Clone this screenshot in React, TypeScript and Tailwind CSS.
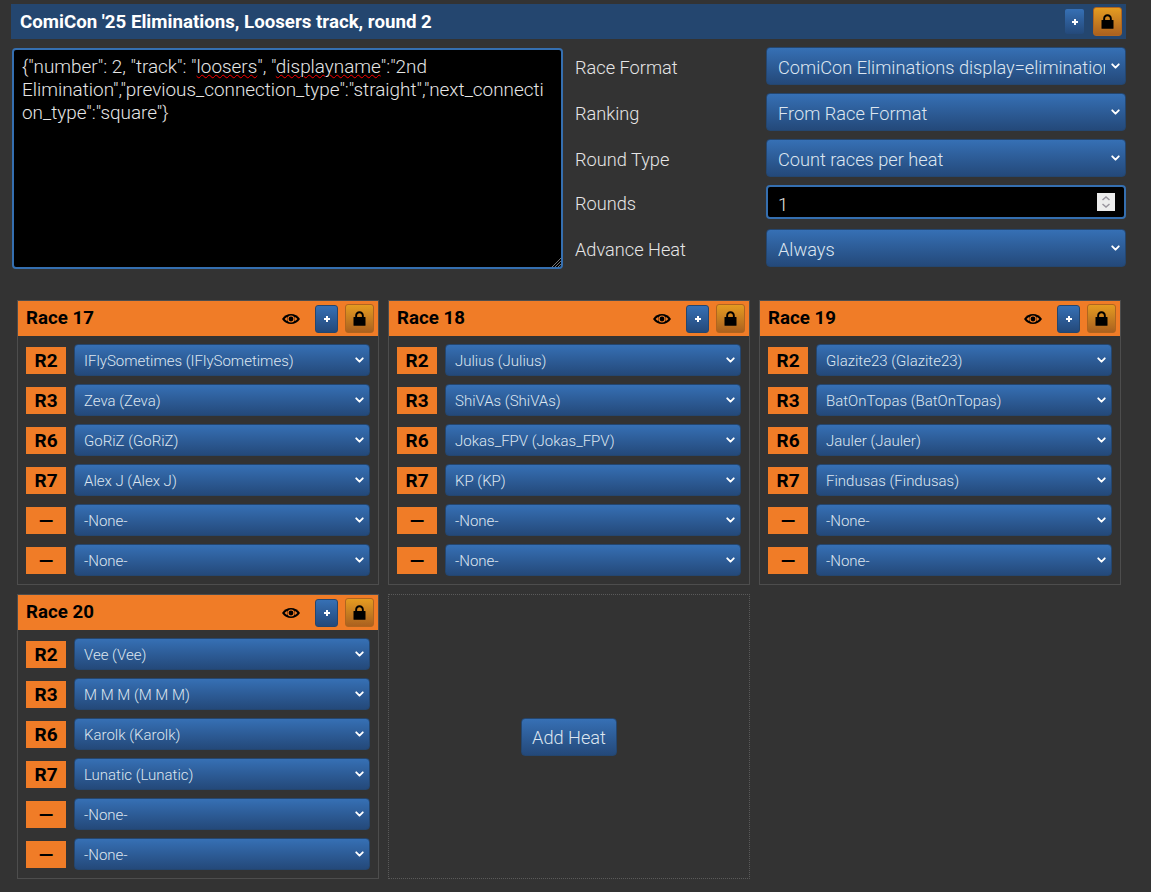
import { ChevronDown } from 'lucide-react';

type Race = { name: string; pilots: [string, string][] };

const races: Race[] = [
  {
    name: 'Race 17',
    pilots: [
      ['R2', 'IFlySometimes (IFlySometimes)'],
      ['R3', 'Zeva (Zeva)'],
      ['R6', 'GoRiZ (GoRiZ)'],
      ['R7', 'Alex J (Alex J)'],
      ['—', '-None-'],
      ['—', '-None-'],
    ],
  },
  {
    name: 'Race 18',
    pilots: [
      ['R2', 'Julius (Julius)'],
      ['R3', 'ShiVAs (ShiVAs)'],
      ['R6', 'Jokas_FPV (Jokas_FPV)'],
      ['R7', 'KP (KP)'],
      ['—', '-None-'],
      ['—', '-None-'],
    ],
  },
  {
    name: 'Race 19',
    pilots: [
      ['R2', 'Glazite23 (Glazite23)'],
      ['R3', 'BatOnTopas (BatOnTopas)'],
      ['R6', 'Jauler (Jauler)'],
      ['R7', 'Findusas (Findusas)'],
      ['—', '-None-'],
      ['—', '-None-'],
    ],
  },
  {
    name: 'Race 20',
    pilots: [
      ['R2', 'Vee (Vee)'],
      ['R3', 'M M M (M M M)'],
      ['R6', 'Karolk (Karolk)'],
      ['R7', 'Lunatic (Lunatic)'],
      ['—', '-None-'],
      ['—', '-None-'],
    ],
  },
];

function LockIcon() {
  return (
    <svg width="13" height="15" viewBox="0 0 13 15" fill="#000">
      <path d="M2.200 6.500V4.600C2.200 2.200 4 .3 6.500 .3s4.300 1.900 4.300 4.300v1.900H8.900V4.700c0-1.500-1-2.500-2.400-2.500S4.100 3.200 4.100 4.700v1.800z" />
      <rect x="0.500" y="6" width="12" height="8.800" rx="0.600" />
    </svg>
  );
}

function EyeIcon() {
  return (
    <svg width="18" height="10" viewBox="0 0 18 10" fill="#000">
      <path d="M0 5C2.200 1.800 5.400 0 9 0s6.800 1.800 9 5c-2.200 3.200-5.400 5-9 5S2.200 8.200 0 5z" />
      <circle cx="9" cy="5" r="3.500" fill="#f07c27" />
      <circle cx="9" cy="5" r="2.400" />
      <path d="M2.600 5C3.500 4 4.400 3.300 5.400 2.800v4.400C4.400 6.700 3.500 6 2.600 5zM15.400 5c-.9-1-1.800-1.700-2.800-2.200v4.400c1-.5 1.900-1.200 2.800-2.200z" fill="#f07c27" />
    </svg>
  );
}

function PlusButton({ className }: { className: string }) {
  return (
    <button
      className={`flex items-center justify-center rounded-[3px] border border-[#24466f] bg-gradient-to-b from-[#3670b5] to-[#24497a] text-white ${className}`}
    >
      <svg width="8" height="8" viewBox="0 0 8 8" fill="#fff">
        <path d="M3 1h2v2h2v2H5v2H3V5H1V3h2z" />
      </svg>
    </button>
  );
}

function LockButton() {
  return (
    <button className="flex h-[29px] w-[29px] items-center justify-center rounded-[3px] border border-[#b0651f] bg-gradient-to-b from-[#e59c20] to-[#ab611f]">
      <LockIcon />
    </button>
  );
}

function Select({ value, className }: { value: string; className: string }) {
  return (
    <div className={`relative ${className}`}>
      <select
        defaultValue={value}
        className="h-full w-full appearance-none rounded-[4px] border border-[#24466f] bg-gradient-to-b from-[#3670b5] to-[#24497a] pr-5 text-[#dde6f0] outline-none"
      >
        <option className="bg-[#24497a]">{value}</option>
      </select>
      <ChevronDown
        size={13}
        strokeWidth={3.500}
        className="pointer-events-none absolute top-1/2 right-1 -translate-y-1/2 text-white"
      />
    </div>
  );
}

function RaceCard({ race }: { race: Race }) {
  return (
    <div className="h-[285px] border border-[#4d4d4d]">
      <div className="flex h-[35px] items-center bg-[#f07c27] pr-1 pl-2 text-black">
        <h2 className="flex-1 text-[18.700px] font-bold">{race.name}</h2>
        <EyeIcon />
        <div className="ml-[15px]">
          <PlusButton className="h-[28px] w-[23px]" />
        </div>
        <div className="ml-[7px]">
          <LockButton />
        </div>
      </div>
      <div className="flex flex-col gap-2 px-2 pt-2">
        {race.pilots.map(([seat, pilot], i) => (
          <div key={i} className="flex h-8 items-center gap-2">
            <div className="flex h-[27px] w-10 items-center justify-center bg-[#f07c27] pt-[2px] text-[19px] font-bold text-black">
              {seat}
            </div>
            <Select value={pilot} className="h-8 flex-1 text-[15px] [&_select]:pt-[2px] [&_select]:pl-[9px]" />
          </div>
        ))}
      </div>
    </div>
  );
}

const formatRows = [
  { label: 'Race Format', value: 'ComiCon Eliminations display=eliminations' },
  { label: 'Ranking', value: 'From Race Format' },
  { label: 'Round Type', value: 'Count races per heat' },
];

export default function App() {
  return (
    <div
      className="h-[892px] overflow-hidden bg-[#333333] pt-1 pr-[25px] pl-[11px] font-light text-[#e6e6e6]"
      style={{ fontFamily: 'Roboto, sans-serif' }}
    >
      {/* Round header */}
      <div className="flex h-[35px] items-center bg-[#24466f] pr-1 pl-[9px]">
        <h1 className="flex-1 pt-[2px] text-[18.700px] font-bold text-white">
          ComiCon '25 Eliminations, Loosers track, round 2
        </h1>
        <PlusButton className="h-[27px] w-[21px]" />
        <div className="ml-2">
          <LockButton />
        </div>
      </div>

      {/* Round settings */}
      <div className="mt-2 flex items-start">
        <div className="relative mt-[1px] ml-[1px] h-[221px] w-[551px] rounded-[4px] border-2 border-[#356fb0] bg-black pt-[5px] pr-[10px] pl-[8px] text-[18.900px] leading-[23px] font-light [overflow-wrap:anywhere] text-[#e6e6e6]">
          {'{"number": 2, "track": "'}
          <span className="underline decoration-[#f00] decoration-wavy decoration-1 underline-offset-1">
            loosers
          </span>
          {'", "'}
          <span className="underline decoration-[#f00] decoration-wavy decoration-1 underline-offset-1">
            displayname
          </span>
          {'":"2nd Elimination","previous_connection_type":"straight","next_connection_type":"square"}'}
          <svg
            width="10"
            height="10"
            viewBox="0 0 10 10"
            className="absolute right-0 bottom-0"
            stroke="#777"
            strokeWidth="1"
          >
            <path d="M1 10 10 1M4 10l6-6M7 10l3-3" />
          </svg>
        </div>

        <div className="ml-3 flex flex-1 flex-col text-[18.200px]">
          {formatRows.map((row) => (
            <div key={row.label} className="mb-2 flex h-[38px] items-center">
              <span className="w-[191px] pt-[3px]">{row.label}</span>
              <Select value={row.value} className="h-[38px] flex-1 [&_select]:pt-1 [&_select]:pl-[11px]" />
            </div>
          ))}
          <div className="mb-[10px] flex h-[34px] items-center">
            <span className="w-[191px] pt-[3px]">Rounds</span>
            <div className="flex h-[34px] flex-1 items-center rounded-[4px] border-2 border-[#356fb0] bg-black pr-[9px] pl-[10px]">
              <span className="flex-1 pt-[5px]">1</span>
              <div className="flex h-[18px] w-[18px] flex-col items-center justify-center bg-[#ececec]">
                <svg width="12" height="14" viewBox="0 0 12 14" fill="none" stroke="#99959e" strokeWidth="1.500">
                  <path d="M2.500 5 6 2l3.500 3M2.500 9 6 12l3.500-3" />
                </svg>
              </div>
            </div>
          </div>
          <div className="flex h-[38px] items-center">
            <span className="w-[191px] pt-[3px]">Advance Heat</span>
            <Select value="Always" className="h-[38px] flex-1 [&_select]:pt-1 [&_select]:pl-[11px]" />
          </div>
        </div>
      </div>

      {/* Heats */}
      <div className="mt-[31px] ml-[6px] grid w-[1104px] grid-cols-3 gap-[9px]">
        {races.map((race) => (
          <RaceCard key={race.name} race={race} />
        ))}
        <div className="flex h-[285px] items-center justify-center border border-dotted border-[#5a5a5a]">
          <button className="h-[38px] w-[96px] rounded-[4px] border border-[#24466f] bg-gradient-to-b from-[#3670b5] to-[#24497a] pt-[2px] text-[18.200px] text-[#dde6f0]">
            Add Heat
          </button>
        </div>
      </div>
    </div>
  );
}
